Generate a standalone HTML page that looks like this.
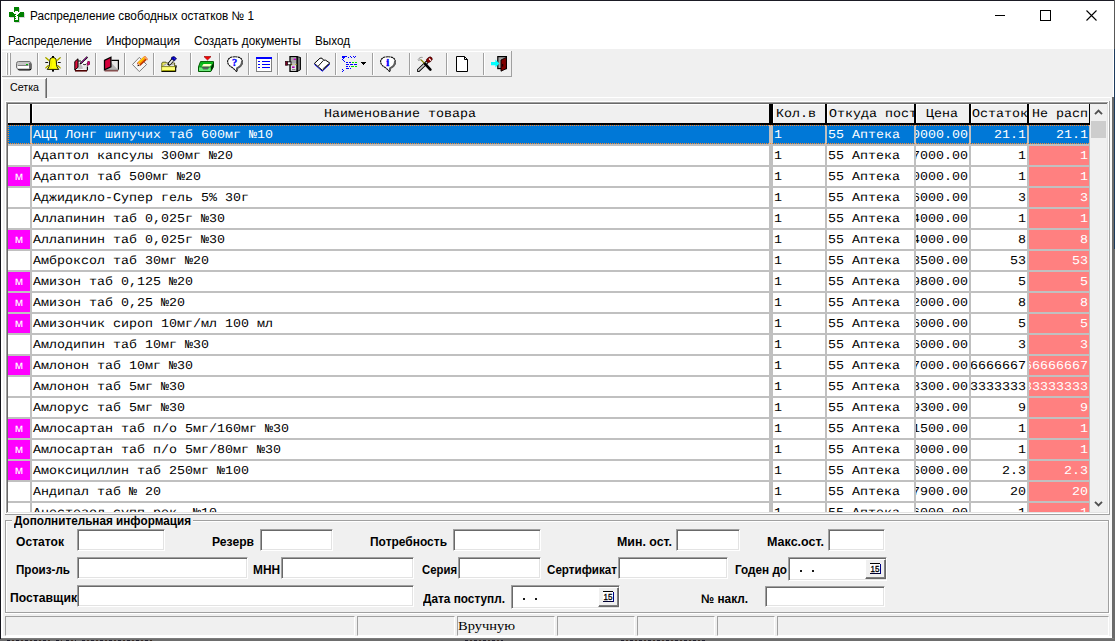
<!DOCTYPE html>
<html lang="ru"><head><meta charset="utf-8"><title>Распределение свободных остатков № 1</title>
<style>
html,body{margin:0;padding:0;background:#f0f0f0;overflow:hidden}
#win{position:relative;width:1115px;height:641px;overflow:hidden;background:#f0f0f0;font-family:'Liberation Sans',sans-serif}
#win div,#win span.t,#win svg{position:absolute;display:block;box-sizing:border-box}
#win span.t{white-space:nowrap;transform-origin:0 50%}
.g{font:13.333px/19px 'Liberation Mono',monospace;white-space:nowrap;overflow:hidden;color:#000}
.g b{font-weight:normal;position:absolute;top:0;white-space:nowrap;transform:scaleY(.9) skewX(.05deg);transform-origin:0 13px}

</style></head>
<body>
<div id="win">
<div style="left:0px;top:0px;width:1115px;height:49px;background:#fff;"></div>
<svg style="left:9px;top:7px" width="16" height="16" viewBox="0 0 16 16" shape-rendering="crispEdges">
<path d="M6 1h5v5h5v5h-5v5h-5v-5h-5v-5h5z" fill="#d9d4dc" transform="translate(0,0)"/>
<path d="M5 0h5v5h5v5h-5v5h-5v-5h-5v-5h5z" fill="#008000"/>
<path d="M6 4h3v1h-3zM4 5h7v1h-1v1h-5v-1h-1zM7 7h2v6h-2zM6 12h3v1h-3zM6 8h1v1h-1zM6 10h1v1h-1z" fill="#fff"/>
<path d="M8 8h1v1h-1z" fill="#008000"/>
</svg>
<span class="t" style="left:30px;top:8px;height:16px;line-height:16px;font:normal 12.5px/16px 'Liberation Sans',sans-serif;color:#000;transform:scaleX(0.9410);">Распределение свободных остатков № 1</span>
<div style="left:995px;top:15px;width:10px;height:1px;background:#000;"></div>
<div style="left:1040px;top:10px;width:11px;height:11px;background:transparent;border:1px solid #000"></div>
<svg style="left:1085px;top:9px" width="13" height="13" viewBox="0 0 13 13"><path d="M1.5 1.5l10 10M11.5 1.5l-10 10" stroke="#000" stroke-width="1.1" fill="none"/></svg>
<span class="t" style="left:8px;top:33px;height:16px;line-height:16px;font:normal 12.5px/16px 'Liberation Sans',sans-serif;color:#000;transform:scaleX(0.9288);">Распределение</span>
<span class="t" style="left:106px;top:33px;height:16px;line-height:16px;font:normal 12.5px/16px 'Liberation Sans',sans-serif;color:#000;transform:scaleX(0.9669);">Информация</span>
<span class="t" style="left:194px;top:33px;height:16px;line-height:16px;font:normal 12.5px/16px 'Liberation Sans',sans-serif;color:#000;transform:scaleX(0.9378);">Создать документы</span>
<span class="t" style="left:315px;top:33px;height:16px;line-height:16px;font:normal 12.5px/16px 'Liberation Sans',sans-serif;color:#000;transform:scaleX(0.9358);">Выход</span>
<div style="left:0px;top:51px;width:511px;height:1px;background:#fff;"></div>
<div style="left:0px;top:76px;width:512px;height:1px;background:#a0a0a0;"></div>
<div style="left:511px;top:51px;width:1px;height:26px;background:#a0a0a0;"></div>
<div style="left:6px;top:53px;width:1px;height:22px;background:#fff;"></div>
<div style="left:7px;top:53px;width:1px;height:22px;background:#a0a0a0;"></div>
<div style="left:9px;top:53px;width:1px;height:22px;background:#fff;"></div>
<div style="left:10px;top:53px;width:1px;height:22px;background:#a0a0a0;"></div>
<div style="left:37px;top:53px;width:1px;height:22px;background:#a0a0a0;"></div>
<div style="left:38px;top:53px;width:1px;height:22px;background:#fff;"></div>
<div style="left:66px;top:53px;width:1px;height:22px;background:#a0a0a0;"></div>
<div style="left:67px;top:53px;width:1px;height:22px;background:#fff;"></div>
<div style="left:95px;top:53px;width:1px;height:22px;background:#a0a0a0;"></div>
<div style="left:96px;top:53px;width:1px;height:22px;background:#fff;"></div>
<div style="left:124px;top:53px;width:1px;height:22px;background:#a0a0a0;"></div>
<div style="left:125px;top:53px;width:1px;height:22px;background:#fff;"></div>
<div style="left:153px;top:53px;width:1px;height:22px;background:#a0a0a0;"></div>
<div style="left:154px;top:53px;width:1px;height:22px;background:#fff;"></div>
<div style="left:190px;top:53px;width:1px;height:22px;background:#a0a0a0;"></div>
<div style="left:191px;top:53px;width:1px;height:22px;background:#fff;"></div>
<div style="left:219px;top:53px;width:1px;height:22px;background:#a0a0a0;"></div>
<div style="left:220px;top:53px;width:1px;height:22px;background:#fff;"></div>
<div style="left:248px;top:53px;width:1px;height:22px;background:#a0a0a0;"></div>
<div style="left:249px;top:53px;width:1px;height:22px;background:#fff;"></div>
<div style="left:277px;top:53px;width:1px;height:22px;background:#a0a0a0;"></div>
<div style="left:278px;top:53px;width:1px;height:22px;background:#fff;"></div>
<div style="left:306px;top:53px;width:1px;height:22px;background:#a0a0a0;"></div>
<div style="left:307px;top:53px;width:1px;height:22px;background:#fff;"></div>
<div style="left:335px;top:53px;width:1px;height:22px;background:#a0a0a0;"></div>
<div style="left:336px;top:53px;width:1px;height:22px;background:#fff;"></div>
<div style="left:372px;top:53px;width:1px;height:22px;background:#a0a0a0;"></div>
<div style="left:373px;top:53px;width:1px;height:22px;background:#fff;"></div>
<div style="left:409px;top:53px;width:1px;height:22px;background:#a0a0a0;"></div>
<div style="left:410px;top:53px;width:1px;height:22px;background:#fff;"></div>
<div style="left:446px;top:53px;width:1px;height:22px;background:#a0a0a0;"></div>
<div style="left:447px;top:53px;width:1px;height:22px;background:#fff;"></div>
<div style="left:483px;top:53px;width:1px;height:22px;background:#a0a0a0;"></div>
<div style="left:484px;top:53px;width:1px;height:22px;background:#fff;"></div>
<svg style="left:16px;top:56px" width="16" height="16" viewBox="0 0 16 16">
<rect x="1.5" y="6.5" width="14" height="8" rx="2" fill="#000"/>
<rect x="0.5" y="5.5" width="14.5" height="7.5" rx="2" fill="#c6c6c6" stroke="#707070"/>
<rect x="13" y="7" width="2" height="5" fill="#6a6a6a"/>
<rect x="1.5" y="10" width="11.5" height="2.5" fill="#fff"/>
<rect x="2" y="9" width="10" height="1" fill="#808080"/>
<rect x="10" y="8" width="2" height="1" fill="#00b800"/>
</svg>
<svg style="left:45px;top:56px" width="16" height="16" viewBox="0 0 16 16">
<g stroke="#e6e600" stroke-width="1.5" fill="none">
<path d="M0.6 1.6l3.6 3M15.4 1.6l-3.6 3M0.6 12l3-2.6M15.4 12l-3-2.6"/>
</g>
<g stroke="#303000" stroke-width="1" fill="none" stroke-dasharray="1.2 1.2">
<path d="M0.6 1.6l3.6 3M15.4 1.6l-3.6 3M0.6 12l3-2.6M15.4 12l-3-2.6"/>
</g>
<path d="M0.3 6.5h2.8M12.9 6.5h2.8" stroke="#111" stroke-width="1"/>
<path d="M8 1.5C4.9 1.5 4.6 4 4.6 7C4.6 9.6 4 11.5 2.2 13.4L13.8 13.4C12 11.5 11.4 9.6 11.4 7C11.4 4 11.1 1.5 8 1.5Z" fill="#ffff00" stroke="#1a1a00" stroke-width="1"/>
<path d="M7 4.5C6.5 7 6.6 10 5.6 12" stroke="#e8e800" stroke-width="1" fill="none"/>
<rect x="7" y="0" width="2" height="1.6" fill="#000"/>
<rect x="7" y="13.8" width="2" height="1.8" fill="#000"/>
</svg>
<svg style="left:74px;top:56px" width="16" height="16" viewBox="0 0 16 16">
<path d="M4.2 4.6L13 4.6L13.6 13.6L1 14.6Z" fill="#fff"/>
<path d="M4.2 6L11 12.5L4.2 13.5Z" fill="#c0c0c0"/>
<path d="M8 8.6L13 7.5L13 13.5L9 13.5Z" fill="#ececec"/>
<path d="M1 14.8L13 14.8" stroke="#500000" stroke-width="1.6"/>
<path d="M0.8 5.6L4 2.8L4 11.4L0.8 14Z" fill="#e0103c" stroke="#000" stroke-width="1"/>
<path d="M4 5L7 5M13.4 10.5L13.4 14.5" stroke="#000" stroke-width="1.1" fill="none"/>
<path d="M13.4 0.8L6.2 7.8" stroke="#000" stroke-width="1.8"/>
<path d="M13 1L7 7" stroke="#a000a0" stroke-width="0.9"/>
<path d="M10.5 5.2L13 4.6L14 6L12 8.4L9 8.4Z" fill="#fff"/>
<path d="M9.2 8.3C10.5 9 12 8.6 12.6 7.6" stroke="#000" stroke-width="0.9" fill="none"/>
<path d="M13.8 5.4L15.8 5.8L15.6 8.4L13.2 9.4Z" fill="#e0008c" stroke="#700030" stroke-width="0.8"/>
</svg>
<svg style="left:103px;top:56px" width="16" height="16" viewBox="0 0 16 16">
<path d="M8 4.5L15 4.5L15 13.8L2 13.8Z" fill="#e6e6e6"/>
<path d="M8 6.5L14.8 13.6L3 13.6Z" fill="#b4b4b4"/>
<path d="M8.4 4.3L15.4 4.3L15.4 13.8" stroke="#000" stroke-width="1.2" fill="none"/>
<path d="M1.6 14L15.6 14" stroke="#707070" stroke-width="1"/>
<path d="M1.6 14.9L15 14.9" stroke="#600000" stroke-width="0.9"/>
<path d="M1.5 4.4L7.9 1.2L7.9 10.8L1.5 13.8Z" fill="#d4003c" stroke="#000" stroke-width="1.3"/>
</svg>
<svg style="left:132px;top:56px" width="16" height="16" viewBox="0 0 16 16">
<path d="M0.5 8.5L7.3 1.4L14.6 8.5L7.3 15.6Z" fill="#f6f6f6" stroke="#707070" stroke-width="0.9"/>
<path d="M6.4 8.8L14.2 1.4" stroke="#b83000" stroke-width="4.2"/>
<path d="M6.4 7.8L13.8 0.8" stroke="#ff9000" stroke-width="2.8"/>
<path d="M7.2 6.4L12.2 1.7" stroke="#ffe000" stroke-width="1.1" stroke-linecap="round"/>
<path d="M12.6 1.2L15.4 3.4" stroke="#f4a070" stroke-width="1.6" stroke-linecap="round"/>
<path d="M6.1 6.6L8.6 9.4L5.8 10Z" fill="#f0b090"/>
<path d="M5.8 8.4L7.4 9.8L5.6 10.2Z" fill="#000"/>
</svg>
<svg style="left:161px;top:56px" width="16" height="16" viewBox="0 0 16 16">
<path d="M0.8 7L1.6 6.2L5 6.2L5.8 7L13.6 7L13.6 11L0.8 11Z" fill="#e8e860" stroke="#404000" stroke-width="0.8"/>
<path d="M2 9.5L5 7.6L13 7.4L13 10.5L2 10.5Z" fill="#e4e4e4"/>
<path d="M2.2 9.6L5.4 7.8M6 8.4L12.8 8.2" stroke="#808080" stroke-width="0.7"/>
<path d="M0.6 10.6L14.6 10.6L14.6 15.4L0.6 15.4Z" fill="#ffff78" stroke="#6a6a00" stroke-width="0.7"/><path d="M0.6 15.5L14.7 15.5L14.7 10.6" fill="none" stroke="#000" stroke-width="1"/>
<path d="M1.2 14.6L14 14.6" stroke="#9a9a00" stroke-width="1"/>
<path d="M14.8 9L15.4 11.4" stroke="#000" stroke-width="1"/>
<path d="M12 3.4L8.2 8" stroke="#000" stroke-width="3.4" stroke-linecap="round"/>
<path d="M12 3.6L8.6 7.6" stroke="#e8e8e8" stroke-width="1.8" stroke-linecap="round"/>
<path d="M10.6 1.2L13 0.4L15.6 2.6L13.6 4.8L10.4 3Z" fill="#0000c0" stroke="#000040" stroke-width="0.6"/>
<path d="M13.4 2.4L14.4 3.2" stroke="#6040d0" stroke-width="1"/>
</svg>
<svg style="left:198px;top:56px" width="16" height="16" viewBox="0 0 16 16">
<path d="M6 0.6L13 0.6L9.5 4Z" fill="#ff0000" stroke="#900000" stroke-width="0.7"/>
<path d="M0.5 10.8L2.5 5.6L15.5 5.6L15.5 10.8L12.8 15.5L0.5 15.5Z" fill="#18c028" stroke="#005800" stroke-width="1"/>
<path d="M13 10.8L15.4 6.4L15.4 10.8L13 15Z" fill="#002800"/>
<path d="M3.2 6.6L14.4 6.6L13.4 8.3L2.5 8.3Z" fill="#00b810"/>
<path d="M5.5 7.9L13.6 7.9L11.6 11L3.5 11Z" fill="#ffffc8"/>
<path d="M3.7 10.8L11.6 10.8L9.6 13.4L5.3 13.4Z" fill="#5c5c64"/>
<path d="M1 11.2L3.6 11.2L5.2 13.6L9.6 13.6L11.6 11.2L12.4 11.2L12.4 15L1 15Z" fill="#6ce87c"/>
<path d="M0.5 10.9L12.8 10.9" stroke="#007010" stroke-width="0.6"/>
</svg>
<svg style="left:227px;top:56px" width="16" height="16" viewBox="0 0 16 16">
<path d="M8 0.7C3.6 0.7 0.6 2.8 0.6 5.6C0.6 8.2 2.6 10 5.4 11.6L9.6 15.4L9.8 12C13.4 11 15.4 8.6 15.4 5.6C15.4 2.8 12.4 0.7 8 0.7Z" fill="#fff" stroke="#101010" stroke-width="1.15" stroke-dasharray="2.2 0.5"/>
<path d="M14.9 4.6C15.3 8.4 13.6 10.8 10.2 12.2L10 15" stroke="#606060" stroke-width="1.9" fill="none"/>
<text x="7.6" y="9.8" font-family="Liberation Serif,serif" font-weight="bold" font-size="10.5" text-anchor="middle" fill="#0000ff" stroke="#0000ff" stroke-width="0.3">?</text>
</svg>
<svg style="left:256px;top:56px" width="16" height="16" viewBox="0 0 16 16" shape-rendering="crispEdges">
<rect x="0" y="1" width="16" height="15" fill="#808080"/>
<rect x="1" y="3" width="14" height="12" fill="#fff"/>
<rect x="0" y="1" width="16" height="2" fill="#0000ff"/>
<g fill="#0000ff"><rect x="2" y="5" width="2" height="1"/><rect x="6" y="5" width="8" height="1"/>
<rect x="2" y="8" width="2" height="1"/><rect x="6" y="8" width="8" height="1"/>
<rect x="2" y="11" width="2" height="1"/><rect x="6" y="11" width="8" height="1"/></g>
</svg>
<svg style="left:285px;top:56px" width="16" height="16" viewBox="0 0 16 16">
<path d="M12 0.6L15.6 1.6L15.6 13.6L12 15.6Z" fill="#4c4c4c" stroke="#000" stroke-width="1"/>
<path d="M13.4 1.4L14.6 1.8L14.6 13.6L13.4 14.4Z" fill="#8a8a8a"/>
<rect x="5" y="0.6" width="7" height="15" fill="#bcbcbc" stroke="#000" stroke-width="1.3"/>
<rect x="6" y="1.6" width="5" height="5.4" fill="#a8a8a8"/>
<rect x="6" y="9.4" width="5" height="5" fill="#e4e4e4"/>
<rect x="8.6" y="2.6" width="2.4" height="1.4" fill="#c000c0"/>
<rect x="7" y="10.4" width="2.6" height="1.6" fill="#b000b0"/>
<rect x="6" y="8" width="1.2" height="1" fill="#b0b000"/><rect x="10.4" y="8" width="1.2" height="1" fill="#b0b000"/>
<rect x="7" y="13" width="3.4" height="0.8" fill="#707070"/>
<rect x="2" y="5.8" width="4" height="3" fill="#fff" stroke="#000" stroke-width="0.9"/>
<rect x="0.5" y="5.6" width="1.8" height="3.6" fill="#800028" stroke="#200008" stroke-width="0.7"/>
</svg>
<svg style="left:314px;top:56px" width="16" height="16" viewBox="0 0 16 16">
<path d="M0.4 8.4L8.3 15.2L15.8 8.2" stroke="#0000ff" stroke-width="1.0" fill="none"/>
<path d="M0.4 7.4L6 2.2L8 2.2L9.6 4.2L11.6 4.2L15.8 7L8.4 14.4Z" fill="#fff" stroke="#000" stroke-width="1"/>
<path d="M9.4 4.4L4 10.4" stroke="#000" stroke-width="0.9"/>
<path d="M14.6 7.8L8.6 13" stroke="#000" stroke-width="0.6"/>
</svg>
<svg style="left:342px;top:56px" width="16" height="16" viewBox="0 0 16 16" shape-rendering="crispEdges">
<g fill="#0000ff">
<rect x="0" y="0" width="5" height="1"/><rect x="0" y="1" width="3" height="1"/>
<rect x="6" y="1" width="1" height="1"/><rect x="8" y="0" width="1" height="1"/><rect x="9" y="1" width="1" height="1"/>
<rect x="11" y="0" width="1" height="1"/><rect x="12" y="1" width="1" height="1"/><rect x="13" y="0" width="1" height="1"/>
<rect x="1" y="2" width="1" height="1"/><rect x="0" y="3" width="1" height="1"/><rect x="1" y="4" width="1" height="1"/><rect x="2" y="5" width="1" height="1"/>
<rect x="4" y="6" width="2" height="1"/><rect x="7" y="6" width="2" height="1"/>
<rect x="4" y="8" width="3" height="1"/><rect x="8" y="8" width="3" height="1"/><rect x="12" y="8" width="3" height="1"/>
<rect x="4" y="10" width="2" height="1"/><rect x="7" y="10" width="1" height="1"/>
<rect x="4" y="12" width="3" height="1"/><rect x="8" y="12" width="1" height="1"/>
<rect x="0" y="13" width="1" height="1"/><rect x="1" y="14" width="1" height="1"/><rect x="0" y="15" width="1" height="1"/>
</g>
<g fill="#00e000"><rect x="10" y="6" width="2" height="1"/><rect x="13" y="6" width="2" height="1"/>
<rect x="9" y="10" width="3" height="1"/><rect x="13" y="10" width="2" height="1"/></g>
</svg>
<svg style="left:361px;top:62px" width="5" height="3" viewBox="0 0 5 3" shape-rendering="crispEdges"><path d="M0 0h5v1h-1v1h-1v1h-1v-1h-1v-1h-1z" fill="#000"/></svg>
<svg style="left:380px;top:56px" width="16" height="16" viewBox="0 0 16 16">
<path d="M8 0.7C3.6 0.7 0.6 2.8 0.6 5.6C0.6 8.2 2.6 10 5.4 11.6L9.6 15.4L9.8 12C13.4 11 15.4 8.6 15.4 5.6C15.4 2.8 12.4 0.7 8 0.7Z" fill="#fff" stroke="#101010" stroke-width="1.15" stroke-dasharray="2.2 0.5"/>
<path d="M14.9 4.6C15.3 8.4 13.6 10.8 10.2 12.2L10 15" stroke="#606060" stroke-width="1.9" fill="none"/>
<text x="7.6" y="9.8" font-family="Liberation Serif,serif" font-weight="bold" font-size="10.5" text-anchor="middle" fill="#0000ff" stroke="#0000ff" stroke-width="0.45">i</text>
</svg>
<svg style="left:417px;top:56px" width="16" height="16" viewBox="0 0 16 16">
<path d="M1.4 14.4L9.6 6.6" stroke="#000" stroke-width="3.4" stroke-linecap="round"/>
<path d="M1.6 14.2L9.6 6.6" stroke="#c8c8c8" stroke-width="1.8" stroke-linecap="round"/>
<ellipse cx="12.3" cy="3.7" rx="3.2" ry="2.3" transform="rotate(-38 12.3 3.7)" fill="#8a0000" stroke="#300000" stroke-width="0.6"/>
<path d="M12.4 3L13.8 4.4" stroke="#fff" stroke-width="1.2" stroke-linecap="round"/>
<path d="M1 3.6C2.2 1.6 4 1.2 5.6 1.4M1.2 4.4L3.8 3.6" stroke="#808080" stroke-width="0.9" fill="none"/>
<path d="M3.8 3.6L8.2 8" stroke="#808000" stroke-width="1.3"/>
<path d="M8.2 8L13.4 13.6" stroke="#000" stroke-width="2.6" stroke-linecap="round"/>
</svg>
<svg style="left:456px;top:56px" width="12" height="16" viewBox="0 0 12 16">
<path d="M0.5 0.5L8.5 0.5L11.5 3.5L11.5 15.5L0.5 15.5Z" fill="#fff" stroke="#000" stroke-width="1"/>
<path d="M8.5 0.5L8.5 3.5L11.5 3.5" fill="none" stroke="#000" stroke-width="1"/>
</svg>
<svg style="left:491px;top:56px" width="16" height="16" viewBox="0 0 16 16">
<rect x="6.8" y="0.6" width="8.8" height="12" fill="#a4a4a4" stroke="#000" stroke-width="1.2"/>
<path d="M10 4L15.4 1.4L15.4 12.6L10 15.2Z" fill="#800000" stroke="#000" stroke-width="0.9"/>
<rect x="11.2" y="8" width="1" height="2.6" fill="#000"/>
<path d="M0 6h4.4v-2.4l4 4-4 4v-2.4h-4.4z" fill="#00ffff"/>
</svg>
<div style="left:2px;top:78px;width:1px;height:20px;background:#fff;"></div>
<div style="left:3px;top:78px;width:43px;height:1px;background:#fff;"></div>
<div style="left:45px;top:79px;width:1px;height:19px;background:#a0a0a0;"></div>
<div style="left:46px;top:78px;width:1px;height:20px;background:#696969;"></div>
<div style="left:47px;top:97px;width:1064px;height:1px;background:#fff;"></div>
<div style="left:2px;top:77px;width:1px;height:560px;background:#fff;"></div>
<span class="t" style="left:10px;top:79px;height:16px;line-height:16px;font:normal 11px/16px 'Liberation Sans',sans-serif;color:#000;transform:scaleX(0.9697);">Сетка</span>
<div style="left:6px;top:102px;width:1103px;height:1px;background:#a0a0a0;"></div>
<div style="left:6px;top:102px;width:1px;height:411px;background:#a0a0a0;"></div>
<div style="left:7px;top:103px;width:1101px;height:1px;background:#696969;"></div>
<div style="left:7px;top:103px;width:1px;height:409px;background:#696969;"></div>
<div style="left:7px;top:512px;width:1101px;height:1px;background:#e3e3e3;"></div>
<div style="left:1107px;top:103px;width:1px;height:410px;background:#e3e3e3;"></div>
<div style="left:6px;top:513px;width:1103px;height:1px;background:#fff;"></div>
<div style="left:1108px;top:102px;width:1px;height:412px;background:#fff;"></div>
<div style="left:8px;top:104px;width:1099px;height:408px;overflow:hidden;background:#fff">
<div style="left:0px;top:0px;width:1082px;height:21px;background:#000;"></div>
<div class="g" style="left:0px;top:0;width:22px;height:19px;background:#f0f0f0;box-shadow:inset 1px 1px 0 #fff"></div>
<div class="g" style="left:24px;top:0;width:737px;height:19px;background:#f0f0f0;box-shadow:inset 1px 1px 0 #fff"><b style="left:292px">Наименование товара</b></div>
<div class="g" style="left:765px;top:0;width:52px;height:19px;background:#f0f0f0;box-shadow:inset 1px 1px 0 #fff"><b style="left:3px">Кол.в</b></div>
<div class="g" style="left:819px;top:0;width:87px;height:19px;background:#f0f0f0;box-shadow:inset 1px 1px 0 #fff"><b style="left:2px">Откуда пост</b></div>
<div class="g" style="left:908px;top:0;width:53px;height:19px;background:#f0f0f0;box-shadow:inset 1px 1px 0 #fff"><b style="left:10px">Цена</b></div>
<div class="g" style="left:963px;top:0;width:56px;height:19px;background:#f0f0f0;box-shadow:inset 1px 1px 0 #fff"><b style="left:1px">Остаток</b></div>
<div class="g" style="left:1021px;top:0;width:60px;height:19px;background:#f0f0f0;box-shadow:inset 1px 1px 0 #fff"><b style="left:3px">Не расп</b></div>
<div style="left:0px;top:21px;width:1082px;height:21px;background:#c0c0c0;"></div>
<div class="g" style="left:0px;top:21px;width:22px;height:19px;background:#0078d7;color:#fff"><b style="left:0;right:0;text-align:center"></b></div>
<div class="g" style="left:24px;top:21px;width:737px;height:19px;background:#0078d7;color:#fff"><b style="left:1px">АЦЦ Лонг шипучих таб 600мг №10</b></div>
<div class="g" style="left:765px;top:21px;width:52px;height:19px;background:#0078d7;color:#fff"><b style="left:1px">1</b></div>
<div class="g" style="left:819px;top:21px;width:87px;height:19px;background:#0078d7;color:#fff"><b style="left:1px">55 Аптека</b></div>
<div class="g" style="left:908px;top:21px;width:53px;height:19px;background:#0078d7;color:#fff"><b style="right:1px">10000.00</b></div>
<div class="g" style="left:963px;top:21px;width:56px;height:19px;background:#0078d7;color:#fff"><b style="right:1px">21.1</b></div>
<div class="g" style="left:1021px;top:21px;width:60px;height:19px;background:#0078d7;color:#fff"><b style="right:1px">21.1</b></div>
<div style="left:0px;top:21px;width:1081px;height:1px;background:repeating-linear-gradient(90deg,#ff8728 0 1px,transparent 1px 2px);"></div>
<div style="left:0px;top:39px;width:1081px;height:1px;background:repeating-linear-gradient(90deg,#ff8728 0 1px,transparent 1px 2px);"></div>
<div style="left:0px;top:21px;width:1px;height:19px;background:repeating-linear-gradient(180deg,#ff8728 0 1px,transparent 1px 2px);"></div>
<div style="left:0px;top:42px;width:1082px;height:21px;background:#c0c0c0;"></div>
<div class="g" style="left:0px;top:42px;width:22px;height:19px;background:#fff;color:#fff"><b style="left:0;right:0;text-align:center"></b></div>
<div class="g" style="left:24px;top:42px;width:737px;height:19px;background:#fff;color:#000"><b style="left:1px">Адаптол капсулы 300мг №20</b></div>
<div class="g" style="left:765px;top:42px;width:52px;height:19px;background:#fff;color:#000"><b style="left:1px">1</b></div>
<div class="g" style="left:819px;top:42px;width:87px;height:19px;background:#fff;color:#000"><b style="left:1px">55 Аптека</b></div>
<div class="g" style="left:908px;top:42px;width:53px;height:19px;background:#fff;color:#000"><b style="right:1px">27000.00</b></div>
<div class="g" style="left:963px;top:42px;width:56px;height:19px;background:#fff;color:#000"><b style="right:1px">1</b></div>
<div class="g" style="left:1021px;top:42px;width:60px;height:19px;background:#ff8080;color:#fff"><b style="right:1px">1</b></div>
<div style="left:0px;top:63px;width:1082px;height:21px;background:#c0c0c0;"></div>
<div class="g" style="left:0px;top:63px;width:22px;height:19px;background:#ff00ff;color:#fff"><b style="left:0;right:0;text-align:center">м</b></div>
<div class="g" style="left:24px;top:63px;width:737px;height:19px;background:#fff;color:#000"><b style="left:1px">Адаптол таб 500мг №20</b></div>
<div class="g" style="left:765px;top:63px;width:52px;height:19px;background:#fff;color:#000"><b style="left:1px">1</b></div>
<div class="g" style="left:819px;top:63px;width:87px;height:19px;background:#fff;color:#000"><b style="left:1px">55 Аптека</b></div>
<div class="g" style="left:908px;top:63px;width:53px;height:19px;background:#fff;color:#000"><b style="right:1px">20000.00</b></div>
<div class="g" style="left:963px;top:63px;width:56px;height:19px;background:#fff;color:#000"><b style="right:1px">1</b></div>
<div class="g" style="left:1021px;top:63px;width:60px;height:19px;background:#ff8080;color:#fff"><b style="right:1px">1</b></div>
<div style="left:0px;top:84px;width:1082px;height:21px;background:#c0c0c0;"></div>
<div class="g" style="left:0px;top:84px;width:22px;height:19px;background:#fff;color:#fff"><b style="left:0;right:0;text-align:center"></b></div>
<div class="g" style="left:24px;top:84px;width:737px;height:19px;background:#fff;color:#000"><b style="left:1px">Аджидикло-Супер гель 5% 30г</b></div>
<div class="g" style="left:765px;top:84px;width:52px;height:19px;background:#fff;color:#000"><b style="left:1px">1</b></div>
<div class="g" style="left:819px;top:84px;width:87px;height:19px;background:#fff;color:#000"><b style="left:1px">55 Аптека</b></div>
<div class="g" style="left:908px;top:84px;width:53px;height:19px;background:#fff;color:#000"><b style="right:1px">16000.00</b></div>
<div class="g" style="left:963px;top:84px;width:56px;height:19px;background:#fff;color:#000"><b style="right:1px">3</b></div>
<div class="g" style="left:1021px;top:84px;width:60px;height:19px;background:#ff8080;color:#fff"><b style="right:1px">3</b></div>
<div style="left:0px;top:105px;width:1082px;height:21px;background:#c0c0c0;"></div>
<div class="g" style="left:0px;top:105px;width:22px;height:19px;background:#fff;color:#fff"><b style="left:0;right:0;text-align:center"></b></div>
<div class="g" style="left:24px;top:105px;width:737px;height:19px;background:#fff;color:#000"><b style="left:1px">Аллапинин таб 0,025г №30</b></div>
<div class="g" style="left:765px;top:105px;width:52px;height:19px;background:#fff;color:#000"><b style="left:1px">1</b></div>
<div class="g" style="left:819px;top:105px;width:87px;height:19px;background:#fff;color:#000"><b style="left:1px">55 Аптека</b></div>
<div class="g" style="left:908px;top:105px;width:53px;height:19px;background:#fff;color:#000"><b style="right:1px">14000.00</b></div>
<div class="g" style="left:963px;top:105px;width:56px;height:19px;background:#fff;color:#000"><b style="right:1px">1</b></div>
<div class="g" style="left:1021px;top:105px;width:60px;height:19px;background:#ff8080;color:#fff"><b style="right:1px">1</b></div>
<div style="left:0px;top:126px;width:1082px;height:21px;background:#c0c0c0;"></div>
<div class="g" style="left:0px;top:126px;width:22px;height:19px;background:#ff00ff;color:#fff"><b style="left:0;right:0;text-align:center">м</b></div>
<div class="g" style="left:24px;top:126px;width:737px;height:19px;background:#fff;color:#000"><b style="left:1px">Аллапинин таб 0,025г №30</b></div>
<div class="g" style="left:765px;top:126px;width:52px;height:19px;background:#fff;color:#000"><b style="left:1px">1</b></div>
<div class="g" style="left:819px;top:126px;width:87px;height:19px;background:#fff;color:#000"><b style="left:1px">55 Аптека</b></div>
<div class="g" style="left:908px;top:126px;width:53px;height:19px;background:#fff;color:#000"><b style="right:1px">24000.00</b></div>
<div class="g" style="left:963px;top:126px;width:56px;height:19px;background:#fff;color:#000"><b style="right:1px">8</b></div>
<div class="g" style="left:1021px;top:126px;width:60px;height:19px;background:#ff8080;color:#fff"><b style="right:1px">8</b></div>
<div style="left:0px;top:147px;width:1082px;height:21px;background:#c0c0c0;"></div>
<div class="g" style="left:0px;top:147px;width:22px;height:19px;background:#fff;color:#fff"><b style="left:0;right:0;text-align:center"></b></div>
<div class="g" style="left:24px;top:147px;width:737px;height:19px;background:#fff;color:#000"><b style="left:1px">Амброксол таб 30мг №20</b></div>
<div class="g" style="left:765px;top:147px;width:52px;height:19px;background:#fff;color:#000"><b style="left:1px">1</b></div>
<div class="g" style="left:819px;top:147px;width:87px;height:19px;background:#fff;color:#000"><b style="left:1px">55 Аптека</b></div>
<div class="g" style="left:908px;top:147px;width:53px;height:19px;background:#fff;color:#000"><b style="right:1px">13500.00</b></div>
<div class="g" style="left:963px;top:147px;width:56px;height:19px;background:#fff;color:#000"><b style="right:1px">53</b></div>
<div class="g" style="left:1021px;top:147px;width:60px;height:19px;background:#ff8080;color:#fff"><b style="right:1px">53</b></div>
<div style="left:0px;top:168px;width:1082px;height:21px;background:#c0c0c0;"></div>
<div class="g" style="left:0px;top:168px;width:22px;height:19px;background:#ff00ff;color:#fff"><b style="left:0;right:0;text-align:center">м</b></div>
<div class="g" style="left:24px;top:168px;width:737px;height:19px;background:#fff;color:#000"><b style="left:1px">Амизон таб 0,125 №20</b></div>
<div class="g" style="left:765px;top:168px;width:52px;height:19px;background:#fff;color:#000"><b style="left:1px">1</b></div>
<div class="g" style="left:819px;top:168px;width:87px;height:19px;background:#fff;color:#000"><b style="left:1px">55 Аптека</b></div>
<div class="g" style="left:908px;top:168px;width:53px;height:19px;background:#fff;color:#000"><b style="right:1px">19800.00</b></div>
<div class="g" style="left:963px;top:168px;width:56px;height:19px;background:#fff;color:#000"><b style="right:1px">5</b></div>
<div class="g" style="left:1021px;top:168px;width:60px;height:19px;background:#ff8080;color:#fff"><b style="right:1px">5</b></div>
<div style="left:0px;top:189px;width:1082px;height:21px;background:#c0c0c0;"></div>
<div class="g" style="left:0px;top:189px;width:22px;height:19px;background:#ff00ff;color:#fff"><b style="left:0;right:0;text-align:center">м</b></div>
<div class="g" style="left:24px;top:189px;width:737px;height:19px;background:#fff;color:#000"><b style="left:1px">Амизон таб 0,25 №20</b></div>
<div class="g" style="left:765px;top:189px;width:52px;height:19px;background:#fff;color:#000"><b style="left:1px">1</b></div>
<div class="g" style="left:819px;top:189px;width:87px;height:19px;background:#fff;color:#000"><b style="left:1px">55 Аптека</b></div>
<div class="g" style="left:908px;top:189px;width:53px;height:19px;background:#fff;color:#000"><b style="right:1px">22000.00</b></div>
<div class="g" style="left:963px;top:189px;width:56px;height:19px;background:#fff;color:#000"><b style="right:1px">8</b></div>
<div class="g" style="left:1021px;top:189px;width:60px;height:19px;background:#ff8080;color:#fff"><b style="right:1px">8</b></div>
<div style="left:0px;top:210px;width:1082px;height:21px;background:#c0c0c0;"></div>
<div class="g" style="left:0px;top:210px;width:22px;height:19px;background:#ff00ff;color:#fff"><b style="left:0;right:0;text-align:center">м</b></div>
<div class="g" style="left:24px;top:210px;width:737px;height:19px;background:#fff;color:#000"><b style="left:1px">Амизончик сироп 10мг/мл 100 мл</b></div>
<div class="g" style="left:765px;top:210px;width:52px;height:19px;background:#fff;color:#000"><b style="left:1px">1</b></div>
<div class="g" style="left:819px;top:210px;width:87px;height:19px;background:#fff;color:#000"><b style="left:1px">55 Аптека</b></div>
<div class="g" style="left:908px;top:210px;width:53px;height:19px;background:#fff;color:#000"><b style="right:1px">16000.00</b></div>
<div class="g" style="left:963px;top:210px;width:56px;height:19px;background:#fff;color:#000"><b style="right:1px">5</b></div>
<div class="g" style="left:1021px;top:210px;width:60px;height:19px;background:#ff8080;color:#fff"><b style="right:1px">5</b></div>
<div style="left:0px;top:231px;width:1082px;height:21px;background:#c0c0c0;"></div>
<div class="g" style="left:0px;top:231px;width:22px;height:19px;background:#fff;color:#fff"><b style="left:0;right:0;text-align:center"></b></div>
<div class="g" style="left:24px;top:231px;width:737px;height:19px;background:#fff;color:#000"><b style="left:1px">Амлодипин таб 10мг №30</b></div>
<div class="g" style="left:765px;top:231px;width:52px;height:19px;background:#fff;color:#000"><b style="left:1px">1</b></div>
<div class="g" style="left:819px;top:231px;width:87px;height:19px;background:#fff;color:#000"><b style="left:1px">55 Аптека</b></div>
<div class="g" style="left:908px;top:231px;width:53px;height:19px;background:#fff;color:#000"><b style="right:1px">26000.00</b></div>
<div class="g" style="left:963px;top:231px;width:56px;height:19px;background:#fff;color:#000"><b style="right:1px">3</b></div>
<div class="g" style="left:1021px;top:231px;width:60px;height:19px;background:#ff8080;color:#fff"><b style="right:1px">3</b></div>
<div style="left:0px;top:252px;width:1082px;height:21px;background:#c0c0c0;"></div>
<div class="g" style="left:0px;top:252px;width:22px;height:19px;background:#ff00ff;color:#fff"><b style="left:0;right:0;text-align:center">м</b></div>
<div class="g" style="left:24px;top:252px;width:737px;height:19px;background:#fff;color:#000"><b style="left:1px">Амлонон таб 10мг №30</b></div>
<div class="g" style="left:765px;top:252px;width:52px;height:19px;background:#fff;color:#000"><b style="left:1px">1</b></div>
<div class="g" style="left:819px;top:252px;width:87px;height:19px;background:#fff;color:#000"><b style="left:1px">55 Аптека</b></div>
<div class="g" style="left:908px;top:252px;width:53px;height:19px;background:#fff;color:#000"><b style="right:1px">17000.00</b></div>
<div class="g" style="left:963px;top:252px;width:56px;height:19px;background:#fff;color:#000"><b style="right:1px">2.66666667</b></div>
<div class="g" style="left:1021px;top:252px;width:60px;height:19px;background:#ff8080;color:#fff"><b style="right:1px">2.66666667</b></div>
<div style="left:0px;top:273px;width:1082px;height:21px;background:#c0c0c0;"></div>
<div class="g" style="left:0px;top:273px;width:22px;height:19px;background:#fff;color:#fff"><b style="left:0;right:0;text-align:center"></b></div>
<div class="g" style="left:24px;top:273px;width:737px;height:19px;background:#fff;color:#000"><b style="left:1px">Амлонон таб 5мг №30</b></div>
<div class="g" style="left:765px;top:273px;width:52px;height:19px;background:#fff;color:#000"><b style="left:1px">1</b></div>
<div class="g" style="left:819px;top:273px;width:87px;height:19px;background:#fff;color:#000"><b style="left:1px">55 Аптека</b></div>
<div class="g" style="left:908px;top:273px;width:53px;height:19px;background:#fff;color:#000"><b style="right:1px">18300.00</b></div>
<div class="g" style="left:963px;top:273px;width:56px;height:19px;background:#fff;color:#000"><b style="right:1px">3.33333333</b></div>
<div class="g" style="left:1021px;top:273px;width:60px;height:19px;background:#ff8080;color:#fff"><b style="right:1px">3.33333333</b></div>
<div style="left:0px;top:294px;width:1082px;height:21px;background:#c0c0c0;"></div>
<div class="g" style="left:0px;top:294px;width:22px;height:19px;background:#fff;color:#fff"><b style="left:0;right:0;text-align:center"></b></div>
<div class="g" style="left:24px;top:294px;width:737px;height:19px;background:#fff;color:#000"><b style="left:1px">Амлорус таб 5мг №30</b></div>
<div class="g" style="left:765px;top:294px;width:52px;height:19px;background:#fff;color:#000"><b style="left:1px">1</b></div>
<div class="g" style="left:819px;top:294px;width:87px;height:19px;background:#fff;color:#000"><b style="left:1px">55 Аптека</b></div>
<div class="g" style="left:908px;top:294px;width:53px;height:19px;background:#fff;color:#000"><b style="right:1px">19300.00</b></div>
<div class="g" style="left:963px;top:294px;width:56px;height:19px;background:#fff;color:#000"><b style="right:1px">9</b></div>
<div class="g" style="left:1021px;top:294px;width:60px;height:19px;background:#ff8080;color:#fff"><b style="right:1px">9</b></div>
<div style="left:0px;top:315px;width:1082px;height:21px;background:#c0c0c0;"></div>
<div class="g" style="left:0px;top:315px;width:22px;height:19px;background:#ff00ff;color:#fff"><b style="left:0;right:0;text-align:center">м</b></div>
<div class="g" style="left:24px;top:315px;width:737px;height:19px;background:#fff;color:#000"><b style="left:1px">Амлосартан таб п/о 5мг/160мг №30</b></div>
<div class="g" style="left:765px;top:315px;width:52px;height:19px;background:#fff;color:#000"><b style="left:1px">1</b></div>
<div class="g" style="left:819px;top:315px;width:87px;height:19px;background:#fff;color:#000"><b style="left:1px">55 Аптека</b></div>
<div class="g" style="left:908px;top:315px;width:53px;height:19px;background:#fff;color:#000"><b style="right:1px">11500.00</b></div>
<div class="g" style="left:963px;top:315px;width:56px;height:19px;background:#fff;color:#000"><b style="right:1px">1</b></div>
<div class="g" style="left:1021px;top:315px;width:60px;height:19px;background:#ff8080;color:#fff"><b style="right:1px">1</b></div>
<div style="left:0px;top:336px;width:1082px;height:21px;background:#c0c0c0;"></div>
<div class="g" style="left:0px;top:336px;width:22px;height:19px;background:#ff00ff;color:#fff"><b style="left:0;right:0;text-align:center">м</b></div>
<div class="g" style="left:24px;top:336px;width:737px;height:19px;background:#fff;color:#000"><b style="left:1px">Амлосартан таб п/о 5мг/80мг №30</b></div>
<div class="g" style="left:765px;top:336px;width:52px;height:19px;background:#fff;color:#000"><b style="left:1px">1</b></div>
<div class="g" style="left:819px;top:336px;width:87px;height:19px;background:#fff;color:#000"><b style="left:1px">55 Аптека</b></div>
<div class="g" style="left:908px;top:336px;width:53px;height:19px;background:#fff;color:#000"><b style="right:1px">18000.00</b></div>
<div class="g" style="left:963px;top:336px;width:56px;height:19px;background:#fff;color:#000"><b style="right:1px">1</b></div>
<div class="g" style="left:1021px;top:336px;width:60px;height:19px;background:#ff8080;color:#fff"><b style="right:1px">1</b></div>
<div style="left:0px;top:357px;width:1082px;height:21px;background:#c0c0c0;"></div>
<div class="g" style="left:0px;top:357px;width:22px;height:19px;background:#ff00ff;color:#fff"><b style="left:0;right:0;text-align:center">м</b></div>
<div class="g" style="left:24px;top:357px;width:737px;height:19px;background:#fff;color:#000"><b style="left:1px">Амоксициллин таб 250мг №100</b></div>
<div class="g" style="left:765px;top:357px;width:52px;height:19px;background:#fff;color:#000"><b style="left:1px">1</b></div>
<div class="g" style="left:819px;top:357px;width:87px;height:19px;background:#fff;color:#000"><b style="left:1px">55 Аптека</b></div>
<div class="g" style="left:908px;top:357px;width:53px;height:19px;background:#fff;color:#000"><b style="right:1px">16000.00</b></div>
<div class="g" style="left:963px;top:357px;width:56px;height:19px;background:#fff;color:#000"><b style="right:1px">2.3</b></div>
<div class="g" style="left:1021px;top:357px;width:60px;height:19px;background:#ff8080;color:#fff"><b style="right:1px">2.3</b></div>
<div style="left:0px;top:378px;width:1082px;height:21px;background:#c0c0c0;"></div>
<div class="g" style="left:0px;top:378px;width:22px;height:19px;background:#fff;color:#fff"><b style="left:0;right:0;text-align:center"></b></div>
<div class="g" style="left:24px;top:378px;width:737px;height:19px;background:#fff;color:#000"><b style="left:1px">Андипал таб № 20</b></div>
<div class="g" style="left:765px;top:378px;width:52px;height:19px;background:#fff;color:#000"><b style="left:1px">1</b></div>
<div class="g" style="left:819px;top:378px;width:87px;height:19px;background:#fff;color:#000"><b style="left:1px">55 Аптека</b></div>
<div class="g" style="left:908px;top:378px;width:53px;height:19px;background:#fff;color:#000"><b style="right:1px">17900.00</b></div>
<div class="g" style="left:963px;top:378px;width:56px;height:19px;background:#fff;color:#000"><b style="right:1px">20</b></div>
<div class="g" style="left:1021px;top:378px;width:60px;height:19px;background:#ff8080;color:#fff"><b style="right:1px">20</b></div>
<div style="left:0px;top:399px;width:1082px;height:21px;background:#c0c0c0;"></div>
<div class="g" style="left:0px;top:399px;width:22px;height:19px;background:#fff;color:#fff"><b style="left:0;right:0;text-align:center"></b></div>
<div class="g" style="left:24px;top:399px;width:737px;height:19px;background:#fff;color:#000"><b style="left:1px">Анестезол супп рек. №10</b></div>
<div class="g" style="left:765px;top:399px;width:52px;height:19px;background:#fff;color:#000"><b style="left:1px">1</b></div>
<div class="g" style="left:819px;top:399px;width:87px;height:19px;background:#fff;color:#000"><b style="left:1px">55 Аптека</b></div>
<div class="g" style="left:908px;top:399px;width:53px;height:19px;background:#fff;color:#000"><b style="right:1px">16000.00</b></div>
<div class="g" style="left:963px;top:399px;width:56px;height:19px;background:#fff;color:#000"><b style="right:1px">1</b></div>
<div class="g" style="left:1021px;top:399px;width:60px;height:19px;background:#ff8080;color:#fff"><b style="right:1px">1</b></div>
<div style="left:1082px;top:0px;width:17px;height:408px;background:#f0f0f0;"></div>
<div style="left:1083px;top:17px;width:15px;height:17px;background:#cdcdcd;"></div>
<svg style="left:1082px;top:0" width="17" height="17" viewBox="0 0 17 17"><path d="M5 10.2l3.5-3.5 3.5 3.5" stroke="#505050" stroke-width="1.9" fill="none"/></svg>
<svg style="left:1082px;top:391px" width="17" height="17" viewBox="0 0 17 17"><path d="M5 6.8l3.5 3.5 3.5-3.5" stroke="#505050" stroke-width="1.9" fill="none"/></svg>
</div>
<div style="left:5px;top:514px;width:1105px;height:1px;background:#a0a0a0;"></div>
<div style="left:5px;top:520px;width:1104px;height:1px;background:#a0a0a0;"></div>
<div style="left:6px;top:521px;width:1102px;height:1px;background:#fff;"></div>
<div style="left:5px;top:520px;width:1px;height:93px;background:#a0a0a0;"></div>
<div style="left:6px;top:521px;width:1px;height:91px;background:#fff;"></div>
<div style="left:1108px;top:520px;width:1px;height:93px;background:#a0a0a0;"></div>
<div style="left:1109px;top:520px;width:1px;height:94px;background:#fff;"></div>
<div style="left:5px;top:612px;width:1104px;height:1px;background:#a0a0a0;"></div>
<div style="left:5px;top:613px;width:1105px;height:1px;background:#fff;"></div>
<div style="left:12px;top:516px;width:181px;height:10px;background:#f0f0f0;"></div>
<span class="t" style="left:14px;top:513px;height:16px;line-height:16px;font:bold 12.5px/16px 'Liberation Sans',sans-serif;color:#000;transform:scaleX(0.9389);">Дополнительная информация</span>
<div style="left:77px;top:529px;width:88px;height:22px;background:#fff;border:1px solid;border-color:#a0a0a0 #fff #fff #a0a0a0;box-shadow:inset 1px 1px 0 #696969,inset -1px -1px 0 #e3e3e3"></div>
<div style="left:260px;top:529px;width:73px;height:22px;background:#fff;border:1px solid;border-color:#a0a0a0 #fff #fff #a0a0a0;box-shadow:inset 1px 1px 0 #696969,inset -1px -1px 0 #e3e3e3"></div>
<div style="left:453px;top:529px;width:88px;height:22px;background:#fff;border:1px solid;border-color:#a0a0a0 #fff #fff #a0a0a0;box-shadow:inset 1px 1px 0 #696969,inset -1px -1px 0 #e3e3e3"></div>
<div style="left:676px;top:529px;width:64px;height:22px;background:#fff;border:1px solid;border-color:#a0a0a0 #fff #fff #a0a0a0;box-shadow:inset 1px 1px 0 #696969,inset -1px -1px 0 #e3e3e3"></div>
<div style="left:828px;top:529px;width:57px;height:22px;background:#fff;border:1px solid;border-color:#a0a0a0 #fff #fff #a0a0a0;box-shadow:inset 1px 1px 0 #696969,inset -1px -1px 0 #e3e3e3"></div>
<div style="left:77px;top:557px;width:171px;height:22px;background:#fff;border:1px solid;border-color:#a0a0a0 #fff #fff #a0a0a0;box-shadow:inset 1px 1px 0 #696969,inset -1px -1px 0 #e3e3e3"></div>
<div style="left:281px;top:557px;width:133px;height:22px;background:#fff;border:1px solid;border-color:#a0a0a0 #fff #fff #a0a0a0;box-shadow:inset 1px 1px 0 #696969,inset -1px -1px 0 #e3e3e3"></div>
<div style="left:458px;top:557px;width:83px;height:22px;background:#fff;border:1px solid;border-color:#a0a0a0 #fff #fff #a0a0a0;box-shadow:inset 1px 1px 0 #696969,inset -1px -1px 0 #e3e3e3"></div>
<div style="left:618px;top:557px;width:110px;height:22px;background:#fff;border:1px solid;border-color:#a0a0a0 #fff #fff #a0a0a0;box-shadow:inset 1px 1px 0 #696969,inset -1px -1px 0 #e3e3e3"></div>
<div style="left:788px;top:557px;width:99px;height:24px;background:#fff;border:1px solid;border-color:#a0a0a0 #fff #fff #a0a0a0;box-shadow:inset 1px 1px 0 #696969,inset -1px -1px 0 #e3e3e3"></div>
<div style="left:77px;top:585px;width:337px;height:22px;background:#fff;border:1px solid;border-color:#a0a0a0 #fff #fff #a0a0a0;box-shadow:inset 1px 1px 0 #696969,inset -1px -1px 0 #e3e3e3"></div>
<div style="left:511px;top:585px;width:109px;height:24px;background:#fff;border:1px solid;border-color:#a0a0a0 #fff #fff #a0a0a0;box-shadow:inset 1px 1px 0 #696969,inset -1px -1px 0 #e3e3e3"></div>
<div style="left:765px;top:586px;width:120px;height:21px;background:#fff;border:1px solid;border-color:#a0a0a0 #fff #fff #a0a0a0;box-shadow:inset 1px 1px 0 #696969,inset -1px -1px 0 #e3e3e3"></div>
<span class="t" style="left:16px;top:534px;height:16px;line-height:16px;font:bold 12.5px/16px 'Liberation Sans',sans-serif;color:#000;transform:scaleX(0.9678);">Остаток</span>
<span class="t" style="left:212px;top:534px;height:16px;line-height:16px;font:bold 12.5px/16px 'Liberation Sans',sans-serif;color:#000;transform:scaleX(0.9700);">Резерв</span>
<span class="t" style="left:370px;top:534px;height:16px;line-height:16px;font:bold 12.5px/16px 'Liberation Sans',sans-serif;color:#000;transform:scaleX(0.9583);">Потребность</span>
<span class="t" style="left:617px;top:534px;height:16px;line-height:16px;font:bold 12.5px/16px 'Liberation Sans',sans-serif;color:#000;transform:scaleX(0.9908);">Мин. ост.</span>
<span class="t" style="left:767px;top:534px;height:16px;line-height:16px;font:bold 12.5px/16px 'Liberation Sans',sans-serif;color:#000;transform:scaleX(1.0008);">Макс.ост.</span>
<span class="t" style="left:16px;top:562px;height:16px;line-height:16px;font:bold 12.5px/16px 'Liberation Sans',sans-serif;color:#000;transform:scaleX(0.9320);">Произ-ль</span>
<span class="t" style="left:253px;top:562px;height:16px;line-height:16px;font:bold 12.5px/16px 'Liberation Sans',sans-serif;color:#000;transform:scaleX(0.9485);">МНН</span>
<span class="t" style="left:422px;top:562px;height:16px;line-height:16px;font:bold 12.5px/16px 'Liberation Sans',sans-serif;color:#000;transform:scaleX(0.9069);">Серия</span>
<span class="t" style="left:547px;top:562px;height:16px;line-height:16px;font:bold 12.5px/16px 'Liberation Sans',sans-serif;color:#000;transform:scaleX(0.9308);">Сертификат</span>
<span class="t" style="left:735px;top:562px;height:16px;line-height:16px;font:bold 12.5px/16px 'Liberation Sans',sans-serif;color:#000;transform:scaleX(0.9384);">Годен до</span>
<span class="t" style="left:10px;top:590px;height:16px;line-height:16px;font:bold 12.5px/16px 'Liberation Sans',sans-serif;color:#000;transform:scaleX(0.9759);">Поставщик</span>
<span class="t" style="left:423px;top:591px;height:16px;line-height:16px;font:bold 12.5px/16px 'Liberation Sans',sans-serif;color:#000;transform:scaleX(0.9455);">Дата поступл.</span>
<span class="t" style="left:701px;top:591px;height:16px;line-height:16px;font:bold 12.5px/16px 'Liberation Sans',sans-serif;color:#000;transform:scaleX(0.9451);">№ накл.</span>
<div style="left:800px;top:570px;width:2px;height:2px;background:#1a1a1a;"></div>
<div style="left:812px;top:570px;width:2px;height:2px;background:#1a1a1a;"></div>
<div style="left:865px;top:559px;width:21px;height:20px;background:#f0f0f0;border:1px solid;border-color:#fff #696969 #696969 #fff;box-shadow:inset -1px -1px 0 #808080"></div>
<svg style="left:870px;top:563px" width="11" height="11" viewBox="0 0 11 11"><rect x="0" y="1" width="11" height="10" fill="#fff"/><path d="M0 0.5H10" stroke="#000" stroke-width="1"/><path d="M0 10.5H11" stroke="#000030" stroke-width="1"/><path d="M10.5 1V11" stroke="#000080" stroke-width="1"/><text x="5" y="8.7" font-family="Liberation Sans,sans-serif" font-size="9" text-anchor="middle" fill="#000" stroke="#000" stroke-width=".3" textLength="9" lengthAdjust="spacingAndGlyphs">15</text></svg>
<div style="left:523px;top:598px;width:2px;height:2px;background:#1a1a1a;"></div>
<div style="left:535px;top:598px;width:2px;height:2px;background:#1a1a1a;"></div>
<div style="left:598px;top:587px;width:21px;height:20px;background:#f0f0f0;border:1px solid;border-color:#fff #696969 #696969 #fff;box-shadow:inset -1px -1px 0 #808080"></div>
<svg style="left:603px;top:591px" width="11" height="11" viewBox="0 0 11 11"><rect x="0" y="1" width="11" height="10" fill="#fff"/><path d="M0 0.5H10" stroke="#000" stroke-width="1"/><path d="M0 10.5H11" stroke="#000030" stroke-width="1"/><path d="M10.5 1V11" stroke="#000080" stroke-width="1"/><text x="5" y="8.7" font-family="Liberation Sans,sans-serif" font-size="9" text-anchor="middle" fill="#000" stroke="#000" stroke-width=".3" textLength="9" lengthAdjust="spacingAndGlyphs">15</text></svg>
<div style="left:5px;top:616px;width:350px;height:20px;border:1px solid;border-color:#a0a0a0 #fff #fff #a0a0a0"></div>
<div style="left:357px;top:616px;width:98px;height:20px;border:1px solid;border-color:#a0a0a0 #fff #fff #a0a0a0"></div>
<div style="left:457px;top:616px;width:98px;height:20px;border:1px solid;border-color:#a0a0a0 #fff #fff #a0a0a0"></div>
<div style="left:557px;top:616px;width:78px;height:20px;border:1px solid;border-color:#a0a0a0 #fff #fff #a0a0a0"></div>
<div style="left:637px;top:616px;width:78px;height:20px;border:1px solid;border-color:#a0a0a0 #fff #fff #a0a0a0"></div>
<div style="left:717px;top:616px;width:58px;height:20px;border:1px solid;border-color:#a0a0a0 #fff #fff #a0a0a0"></div>
<div style="left:777px;top:616px;width:332px;height:20px;border:1px solid;border-color:#a0a0a0 #fff #fff #a0a0a0"></div>
<span class="t" style="left:458px;top:618px;height:16px;line-height:16px;font:normal 13px/16px 'Liberation Serif',serif;color:#000;transform:scaleX(1.1131);">Вручную</span>
<div style="left:5px;top:101px;width:1104px;height:1px;background:#fff;"></div>
<div style="left:5px;top:101px;width:1px;height:413px;background:#fff;"></div>
<div style="left:1109px;top:101px;width:1px;height:414px;background:#a0a0a0;"></div>
<div style="left:1110px;top:98px;width:2px;height:540px;background:#f8f8f8;"></div>
<div style="left:1112px;top:97px;width:2px;height:541px;background:#6b6b6b;"></div>
<div style="left:1px;top:49px;width:1px;height:589px;background:#fff;"></div>
<div style="left:1113px;top:49px;width:1px;height:48px;background:#fff;"></div>
<div style="left:1px;top:636px;width:1111px;height:2px;background:#fff;"></div>
<div style="left:0px;top:638px;width:1115px;height:1px;background:#7c7c7c;"></div>
<div style="left:0px;top:639px;width:1115px;height:2px;background:#6d6d6d;"></div>
<div style="left:7px;top:640px;width:44px;height:1px;background:repeating-linear-gradient(90deg,#1e1e2c 0 3px,#6d6d6d 3px 5px,#3a2a20 5px 7px,#6d6d6d 7px 9px);"></div>
<div style="left:56px;top:640px;width:6px;height:1px;background:repeating-linear-gradient(90deg,#1e1e2c 0 3px,#6d6d6d 3px 5px,#3a2a20 5px 7px,#6d6d6d 7px 9px);"></div>
<div style="left:66px;top:640px;width:10px;height:1px;background:repeating-linear-gradient(90deg,#1e1e2c 0 3px,#6d6d6d 3px 5px,#3a2a20 5px 7px,#6d6d6d 7px 9px);"></div>
<div style="left:82px;top:640px;width:70px;height:1px;background:repeating-linear-gradient(90deg,#1e1e2c 0 3px,#6d6d6d 3px 5px,#3a2a20 5px 7px,#6d6d6d 7px 9px);"></div>
<div style="left:621px;top:640px;width:84px;height:1px;background:repeating-linear-gradient(90deg,#1e1e2c 0 3px,#6d6d6d 3px 5px,#3a2a20 5px 7px,#6d6d6d 7px 9px);"></div>
<div style="left:465px;top:640px;width:38px;height:1px;background:repeating-linear-gradient(90deg,#1e1e2c 0 3px,#6d6d6d 3px 5px,#3a2a20 5px 7px,#6d6d6d 7px 9px);"></div>
<div style="left:0px;top:0px;width:1115px;height:1px;background:#1b1b25;"></div>
<div style="left:0px;top:0px;width:1px;height:639px;background:#14141c;"></div>
<div style="left:1114px;top:0px;width:1px;height:49px;background:#585858;"></div>
<div style="left:1114px;top:49px;width:1px;height:200px;background:#1c3a5c;"></div>
<div style="left:1114px;top:249px;width:1px;height:392px;background:#6b6b6b;"></div>
</div>
</body></html>
